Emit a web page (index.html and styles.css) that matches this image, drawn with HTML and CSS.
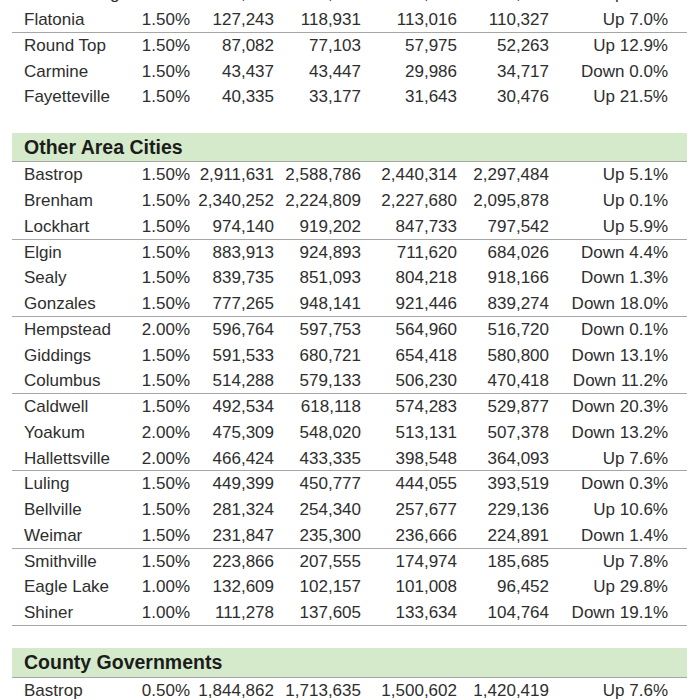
FILE: index.html
```html
<!DOCTYPE html>
<html lang="en">
  <head>
    <meta charset="UTF-8" />
    <title>Sales Tax Allocations</title>
    <link rel="stylesheet" href="styles.css">
  </head>
  <body>
    <div class="sheet">
      <div class="group">
        <div class="row"><span>Schulenburg</span><span>1.50%</span><span>270,582</span><span>253,531</span><span>251,856</span><span>244,374</span><span>Up 6.8%</span></div>
        <div class="row end"><span>Flatonia</span><span>1.50%</span><span>127,243</span><span>118,931</span><span>113,016</span><span>110,327</span><span>Up 7.0%</span></div>
        <div class="row"><span>Round Top</span><span>1.50%</span><span>87,082</span><span>77,103</span><span>57,975</span><span>52,263</span><span>Up 12.9%</span></div>
        <div class="row"><span>Carmine</span><span>1.50%</span><span>43,437</span><span>43,447</span><span>29,986</span><span>34,717</span><span>Down 0.0%</span></div>
        <div class="row"><span>Fayetteville</span><span>1.50%</span><span>40,335</span><span>33,177</span><span>31,643</span><span>30,476</span><span>Up 21.5%</span></div>
      </div>

      <div class="group">
        <div class="band">Other Area Cities</div>
        <div class="row"><span>Bastrop</span><span>1.50%</span><span>2,911,631</span><span>2,588,786</span><span>2,440,314</span><span>2,297,484</span><span>Up 5.1%</span></div>
        <div class="row"><span>Brenham</span><span>1.50%</span><span>2,340,252</span><span>2,224,809</span><span>2,227,680</span><span>2,095,878</span><span>Up 0.1%</span></div>
        <div class="row end"><span>Lockhart</span><span>1.50%</span><span>974,140</span><span>919,202</span><span>847,733</span><span>797,542</span><span>Up 5.9%</span></div>
        <div class="row"><span>Elgin</span><span>1.50%</span><span>883,913</span><span>924,893</span><span>711,620</span><span>684,026</span><span>Down 4.4%</span></div>
        <div class="row"><span>Sealy</span><span>1.50%</span><span>839,735</span><span>851,093</span><span>804,218</span><span>918,166</span><span>Down 1.3%</span></div>
        <div class="row end"><span>Gonzales</span><span>1.50%</span><span>777,265</span><span>948,141</span><span>921,446</span><span>839,274</span><span>Down 18.0%</span></div>
        <div class="row"><span>Hempstead</span><span>2.00%</span><span>596,764</span><span>597,753</span><span>564,960</span><span>516,720</span><span>Down 0.1%</span></div>
        <div class="row"><span>Giddings</span><span>1.50%</span><span>591,533</span><span>680,721</span><span>654,418</span><span>580,800</span><span>Down 13.1%</span></div>
        <div class="row end"><span>Columbus</span><span>1.50%</span><span>514,288</span><span>579,133</span><span>506,230</span><span>470,418</span><span>Down 11.2%</span></div>
        <div class="row"><span>Caldwell</span><span>1.50%</span><span>492,534</span><span>618,118</span><span>574,283</span><span>529,877</span><span>Down 20.3%</span></div>
        <div class="row"><span>Yoakum</span><span>2.00%</span><span>475,309</span><span>548,020</span><span>513,131</span><span>507,378</span><span>Down 13.2%</span></div>
        <div class="row end"><span>Hallettsville</span><span>2.00%</span><span>466,424</span><span>433,335</span><span>398,548</span><span>364,093</span><span>Up 7.6%</span></div>
        <div class="row"><span>Luling</span><span>1.50%</span><span>449,399</span><span>450,777</span><span>444,055</span><span>393,519</span><span>Down 0.3%</span></div>
        <div class="row"><span>Bellville</span><span>1.50%</span><span>281,324</span><span>254,340</span><span>257,677</span><span>229,136</span><span>Up 10.6%</span></div>
        <div class="row end"><span>Weimar</span><span>1.50%</span><span>231,847</span><span>235,300</span><span>236,666</span><span>224,891</span><span>Down 1.4%</span></div>
        <div class="row"><span>Smithville</span><span>1.50%</span><span>223,866</span><span>207,555</span><span>174,974</span><span>185,685</span><span>Up 7.8%</span></div>
        <div class="row"><span>Eagle Lake</span><span>1.00%</span><span>132,609</span><span>102,157</span><span>101,008</span><span>96,452</span><span>Up 29.8%</span></div>
        <div class="row end"><span>Shiner</span><span>1.00%</span><span>111,278</span><span>137,605</span><span>133,634</span><span>104,764</span><span>Down 19.1%</span></div>
      </div>

      <div class="group">
        <div class="band">County Governments</div>
        <div class="row"><span>Bastrop</span><span>0.50%</span><span>1,844,862</span><span>1,713,635</span><span>1,500,602</span><span>1,420,419</span><span>Up 7.6%</span></div>
      </div>
    </div>
  </body>
</html>
```

FILE: styles.css
```css
body {
  margin: 0;
  background: #fff;
  font-family: "Liberation Sans", Arial, sans-serif;
  color: #2e2e2e;
  overflow: hidden;
}
.sheet {
  margin: -18.6px 13px 0 12px;
}
.group {
  margin-bottom: 22.6px;
}
.band {
  height: 29.5px;
  box-sizing: border-box;
  padding-left: 12px;
  background: #d5eacb;
  border-bottom: 1.5px solid #a6a6a6;
  font-size: 19.5px;
  font-weight: bold;
  color: #1c1c1c;
  line-height: 29px;
}
.row {
  display: grid;
  grid-template-columns: 118px 60px 84px 87px 96px 92px 119px;
  height: 25.75px;
  box-sizing: border-box;
  font-size: 17px;
  line-height: 25.75px;
  white-space: nowrap;
}
.row span {
  text-align: right;
}
.row span:first-child {
  text-align: left;
  padding-left: 12px;
}
.end {
  border-bottom: 1.5px solid #a6a6a6;
}
```
